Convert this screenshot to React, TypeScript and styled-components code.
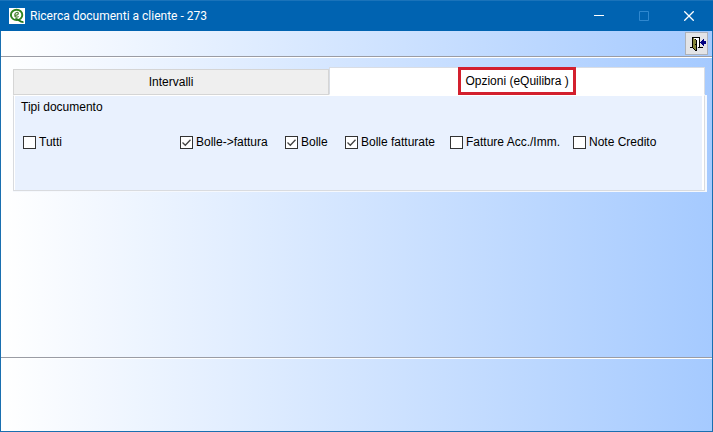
import React, { useState } from "react";
import styled, { createGlobalStyle } from "styled-components";

const GlobalStyle = createGlobalStyle`
  *, *::before, *::after { box-sizing: border-box; }
  body { margin: 0; }
  button { font: inherit; color: inherit; }
`;

const Window = styled.div`
  display: flex;
  flex-direction: column;
  min-height: 100vh;
  border: 1px solid #1a6fb0;
  border-top: 0;
  background: linear-gradient(to right, #ffffff 0%, #a5caff 100%);
  color: #000;
  font: 12px/16px "Liberation Sans", Arial, sans-serif;
`;

const TitleBar = styled.header`
  display: flex;
  align-items: center;
  height: 31px;
  margin: 0 -1px;
  padding-left: 9px;
  background: #0063b1;
  border-top: 1px solid #1a73ba;
  color: #fff;
`;

const Title = styled.h1`
  flex: 1;
  margin: 0 0 0 5px;
  font: 400 12px/16px Roboto, "Open Sans", sans-serif;
`;

const WindowButton = styled.button`
  display: flex;
  align-items: center;
  justify-content: center;
  width: 45px;
  height: 30px;
  padding: 0;
  border: 0;
  background: none;

  &:disabled { color: #2f88cf; }
  &:last-child { margin-right: 2px; }
`;

const Toolbar = styled.div`
  display: flex;
  justify-content: flex-end;
  align-items: flex-start;
  height: 27px;
  padding: 1px 4px 0 0;
  border-bottom: 1px solid #fff;
  box-shadow: inset 0 -1px #9a9ca4;
`;

const ToolButton = styled.button`
  display: flex;
  align-items: center;
  justify-content: center;
  width: 23px;
  height: 23px;
  padding: 0;
  border: 1px solid #adb2ba;
  background: #e3e4e7;
`;

const Content = styled.main`
  flex: 1;
  padding: 9px 5px 12px 12px;
`;

const TabList = styled.div`
  display: flex;
  align-items: flex-end;
  padding-right: 2px;
`;

const Tab = styled.button<{ $active: boolean; $grow: number }>`
  display: flex;
  align-items: center;
  justify-content: center;
  flex: ${(p) => p.$grow} 1 0;
  min-width: 0;
  height: ${(p) => (p.$active ? 28 : 26)}px;
  padding: 0;
  border: ${(p) => (p.$active ? "1px solid #d9dde4" : "1px solid #d5d5d5")};
  border-bottom-color: ${(p) => (p.$active ? "#fff" : "#d5d5d5")};
  background: ${(p) => (p.$active ? "#fff" : "#efefef")};
`;

const Highlight = styled.span`
  padding: 3px 4px;
  border: 3px solid #d3202e;
  background: #fff;
`;

const Panel = styled.section`
  display: flex;
  padding-right: 2px;
  border-bottom: 1px solid #f5f8fd;
  background: #f5f9ff;
`;

const PanelBody = styled.fieldset`
  flex: 1;
  min-width: 0;
  min-height: 96px;
  margin: 0;
  padding: 3px 7px;
  border: 1px solid #d9dbdf;
  border-top-color: #fff;
  background: #e9f1fe;
  box-shadow: inset 1px 0 #fff, inset -2px 0 #fff;
`;

const Legend = styled.legend`
  float: left;
  width: 100%;
  margin-bottom: 19px;
  padding: 0;
`;

const Options = styled.div`
  clear: both;
  display: grid;
  grid-template-columns: 157fr 105fr 60fr 105fr 123fr 124fr;
  padding-left: 2px;
`;

const Option = styled.label`
  display: flex;
  align-items: center;
  gap: 3px;
  white-space: nowrap;
`;

const BoxFrame = styled.span`
  display: grid;
  flex: none;
  width: 13px;
  height: 13px;

  & > * { grid-area: 1 / 1; }
  svg { pointer-events: none; }
`;

const CheckBox = styled.input`
  appearance: none;
  width: 13px;
  height: 13px;
  margin: 0;
  border: 1px solid #333;
  background: #fff;

  &:not(:checked) + svg { visibility: hidden; }
`;

const Footer = styled.footer`
  height: 74px;
  border-top: 1px solid #9a9ca4;
  box-shadow: inset 0 1px #fff;
`;

const Logo = () => (
  <svg width="16" height="16" viewBox="0 0 16 16" aria-hidden="true">
    <rect width="16" height="16" fill="#fff" />
    <ellipse cx="7.6" cy="6.900" rx="5.700" ry="5.200" fill="none" stroke="#2f8420" strokeWidth="1.900" />
    <path d="M5.700 7.400c2.400.2 3.900-.9 3.600-2.200-.4-1.300-2.900-.9-3.500 1.300-.5 2.400 1.500 3.300 3.900 2" fill="none" stroke="#4d8636" strokeWidth="1.200" />
    <path d="M6.500 11c3-.6 3.500 3.300 8 3.200" fill="none" stroke="#23751a" strokeWidth="1.800" />
  </svg>
);

const ExitIcon = () => (
  <svg width="19" height="19" viewBox="0 0 19 19" shapeRendering="crispEdges" aria-hidden="true">
    <path d="M7 4h5v9H7z" fill="#fff" />
    <path d="M5 3h8v1H5zM12 3h1v11h-1zM3 13h3v1H3zM11 13h5v1h-5z" fill="#000" />
    <path d="M5 3h1v11H5zM6 14h1v1H6zM7 15h1v1H7zM8 16h2v1H8zM9 6h1v11H9zM8 5h1v1H8z" fill="#000" />
    <path d="M6 4h1v1h1v1h1v10H8v-1H7v-1H6z" fill="#85853a" />
    <path d="M8 10h1v1H8z" fill="#000" />
    <path d="M13 8h1V7h1V6h1V5h1v2h2v3h-2v2h-1v-1h-1v-1h-1V9h-1z" fill="#000080" />
  </svg>
);

const Tick = () => (
  <svg width="13" height="13" viewBox="0 0 13 13" aria-hidden="true">
    <path d="M2.500 6.500l2.800 2.800 5.200-5.600" fill="none" stroke="#444" strokeWidth="1.300" />
  </svg>
);

const documentTypes = [
  { label: "Tutti", checked: false },
  { label: "Bolle->fattura", checked: true },
  { label: "Bolle", checked: true },
  { label: "Bolle fatturate", checked: true },
  { label: "Fatture Acc./Imm.", checked: false },
  { label: "Note Credito", checked: false },
];

export default function App() {
  const [active, setActive] = useState(1);
  return (
    <>
      <GlobalStyle />
      <Window>
        <TitleBar>
          <Logo />
          <Title>Ricerca documenti a cliente - 273</Title>
          <WindowButton aria-label="Riduci a icona">
            <svg width="10" height="10"><path d="M0 4.500h10" stroke="currentColor" /></svg>
          </WindowButton>
          <WindowButton aria-label="Ingrandisci" disabled>
            <svg width="10" height="10"><path d="M.5.5h9v9h-9z" fill="none" stroke="currentColor" /></svg>
          </WindowButton>
          <WindowButton aria-label="Chiudi">
            <svg width="10" height="10"><path d="M.3.3l9.400 9.400M9.700.3L.3 9.700" stroke="currentColor" strokeWidth="1.300" /></svg>
          </WindowButton>
        </TitleBar>
        <Toolbar>
          <ToolButton aria-label="Esci"><ExitIcon /></ToolButton>
        </Toolbar>
        <Content>
          <TabList role="tablist">
            <Tab role="tab" $grow={316} $active={active === 0} aria-selected={active === 0} onClick={() => setActive(0)}>
              Intervalli
            </Tab>
            <Tab role="tab" $grow={376} $active={active === 1} aria-selected={active === 1} onClick={() => setActive(1)}>
              <Highlight>Opzioni (eQuilibra )</Highlight>
            </Tab>
          </TabList>
          <Panel role="tabpanel">
            <PanelBody>
              <Legend>Tipi documento</Legend>
              <Options>
                {documentTypes.map((type) => (
                  <Option key={type.label}>
                    <BoxFrame>
                      <CheckBox type="checkbox" defaultChecked={type.checked} />
                      <Tick />
                    </BoxFrame>
                    {type.label}
                  </Option>
                ))}
              </Options>
            </PanelBody>
          </Panel>
        </Content>
        <Footer />
      </Window>
    </>
  );
}
